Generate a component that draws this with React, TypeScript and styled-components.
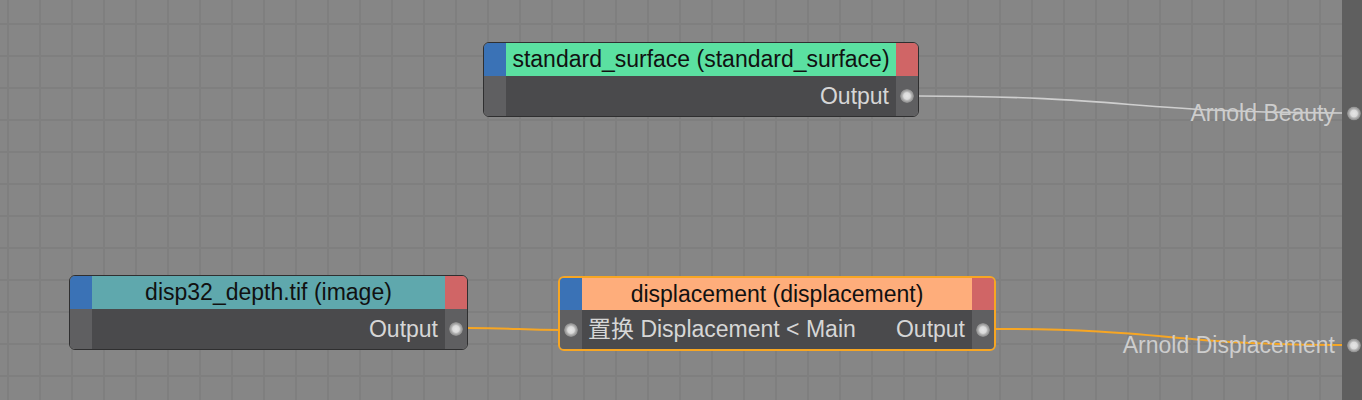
import React from "react";
import styled, { createGlobalStyle, css } from "styled-components";

const GlobalStyle = createGlobalStyle`
  html, body {
    margin: 0;
    padding: 0;
    background: #868686;
  }
  body {
    font-family: "Liberation Sans", "Noto Sans CJK SC", Arial, sans-serif;
  }
`;

const Editor = styled.div`
  display: flex;
  width: 100%;
  height: 400px;
  overflow: hidden;
`;

const Canvas = styled.div`
  position: relative;
  flex: 1;
  height: 100%;
  background-color: #868686;
  background-image: linear-gradient(to right, #7f7f7f 2px, transparent 2px),
    linear-gradient(to bottom, #7f7f7f 2px, transparent 2px);
  background-size: 32px 32px;
  background-position: 7px 23px;
`;

const SidePanel = styled.div`
  width: 20px;
  height: 100%;
  background: #5f5f5f;
`;

const Wires = styled.svg`
  position: absolute;
  left: 0;
  top: 0;
  width: 100%;
  height: 100%;
  z-index: 2;
  pointer-events: none;
`;

const Socket = styled.span`
  display: block;
  flex: none;
  width: 14px;
  height: 14px;
  border-radius: 50%;
  background: radial-gradient(
    circle closest-side,
    #e6e6e6 0,
    #dadada 48%,
    #bdbdbd 60%,
    #a2a2a2 78%,
    #929292 92%,
    rgba(140, 140, 140, 0.4) 100%
  );
`;

const OutputLabel = styled.div<{ $y: number }>`
  position: absolute;
  right: 7px;
  top: ${(p) => p.$y}px;
  display: flex;
  align-items: center;
  gap: 12px;
  transform: translateY(-50%);
  z-index: 3;
  color: #cdcdcd;
  font-size: 23px;
  white-space: nowrap;
  & > ${Socket} {
    margin-right: -26px;
  }
`;

const LabelText = styled.span`
  position: relative;
  z-index: 0;
`;

const NodeBox = styled.div<{ $x: number; $y: number; $w: number; $selected?: boolean }>`
  position: absolute;
  left: ${(p) => p.$x}px;
  top: ${(p) => p.$y}px;
  width: ${(p) => p.$w}px;
  box-sizing: border-box;
  display: grid;
  grid-template-columns: 22px 1fr 22px;
  grid-template-rows: 33px 40px;
  border: 1.5px solid #2f2f30;
  border-radius: 6px;
  overflow: hidden;
  z-index: 4;
  ${(p) =>
    p.$selected &&
    css`
      border: 2px solid #f7a623;
      grid-template-rows: 32px 39px;
    `}
`;

const InCap = styled.div`
  background: #3a72b6;
`;

const OutCap = styled.div`
  background: #d06566;
`;

const Title = styled.div<{ $color: string }>`
  background: ${(p) => p.$color};
  color: #111;
  font-size: 23px;
  display: flex;
  align-items: center;
  justify-content: center;
  white-space: nowrap;
  overflow: hidden;
`;

const Strip = styled.div`
  background: #5f5f61;
  display: flex;
  align-items: center;
  justify-content: center;
`;

const Body = styled.div`
  background: #4a4a4c;
  color: #d6d6d6;
  font-size: 23px;
  line-height: 1;
  display: flex;
  align-items: center;
  justify-content: space-between;
  padding: 0 7px 0 6px;
  white-space: nowrap;
`;

const Spacer = styled.span``;

type NodeProps = {
  x: number;
  y: number;
  w: number;
  title: string;
  color: string;
  input?: string;
  selected?: boolean;
};

const Node = ({ x, y, w, title, color, input, selected }: NodeProps) => (
  <NodeBox $x={x} $y={y} $w={w} $selected={selected}>
    <InCap />
    <Title $color={color}>{title}</Title>
    <OutCap />
    <Strip>{input && <Socket />}</Strip>
    <Body>
      {input ? <span>{input}</span> : <Spacer />}
      <span>Output</span>
    </Body>
    <Strip>
      <Socket />
    </Strip>
  </NodeBox>
);

export default function App() {
  return (
    <>
      <GlobalStyle />
      <Editor>
        <Canvas>
          <OutputLabel $y={113}>
            <LabelText>Arnold Beauty</LabelText>
            <Socket />
          </OutputLabel>
          <OutputLabel $y={345}>
            <LabelText>Arnold Displacement</LabelText>
            <Socket />
          </OutputLabel>
          <Wires>
            <path
              d="M918 96 C1130 96, 1130 113, 1346 113"
              fill="none"
              stroke="#cfcfcf"
              strokeWidth="1.6"
            />
            <path
              d="M467 328 C518 328, 518 330, 562 330"
              fill="none"
              stroke="#f7a623"
              strokeWidth="2"
            />
            <path
              d="M996 329 C1169 329, 1169 345, 1346 345"
              fill="none"
              stroke="#f7a623"
              strokeWidth="2"
            />
          </Wires>
          <Node
            x={483}
            y={42}
            w={436}
            title="standard_surface (standard_surface)"
            color="#5be0a1"
          />
          <Node
            x={69}
            y={275}
            w={399}
            title="disp32_depth.tif (image)"
            color="#5fa8ad"
          />
          <Node
            x={558}
            y={276}
            w={438}
            title="displacement (displacement)"
            color="#fead7b"
            input="置换 Displacement < Main"
            selected
          />
        </Canvas>
        <SidePanel />
      </Editor>
    </>
  );
}
